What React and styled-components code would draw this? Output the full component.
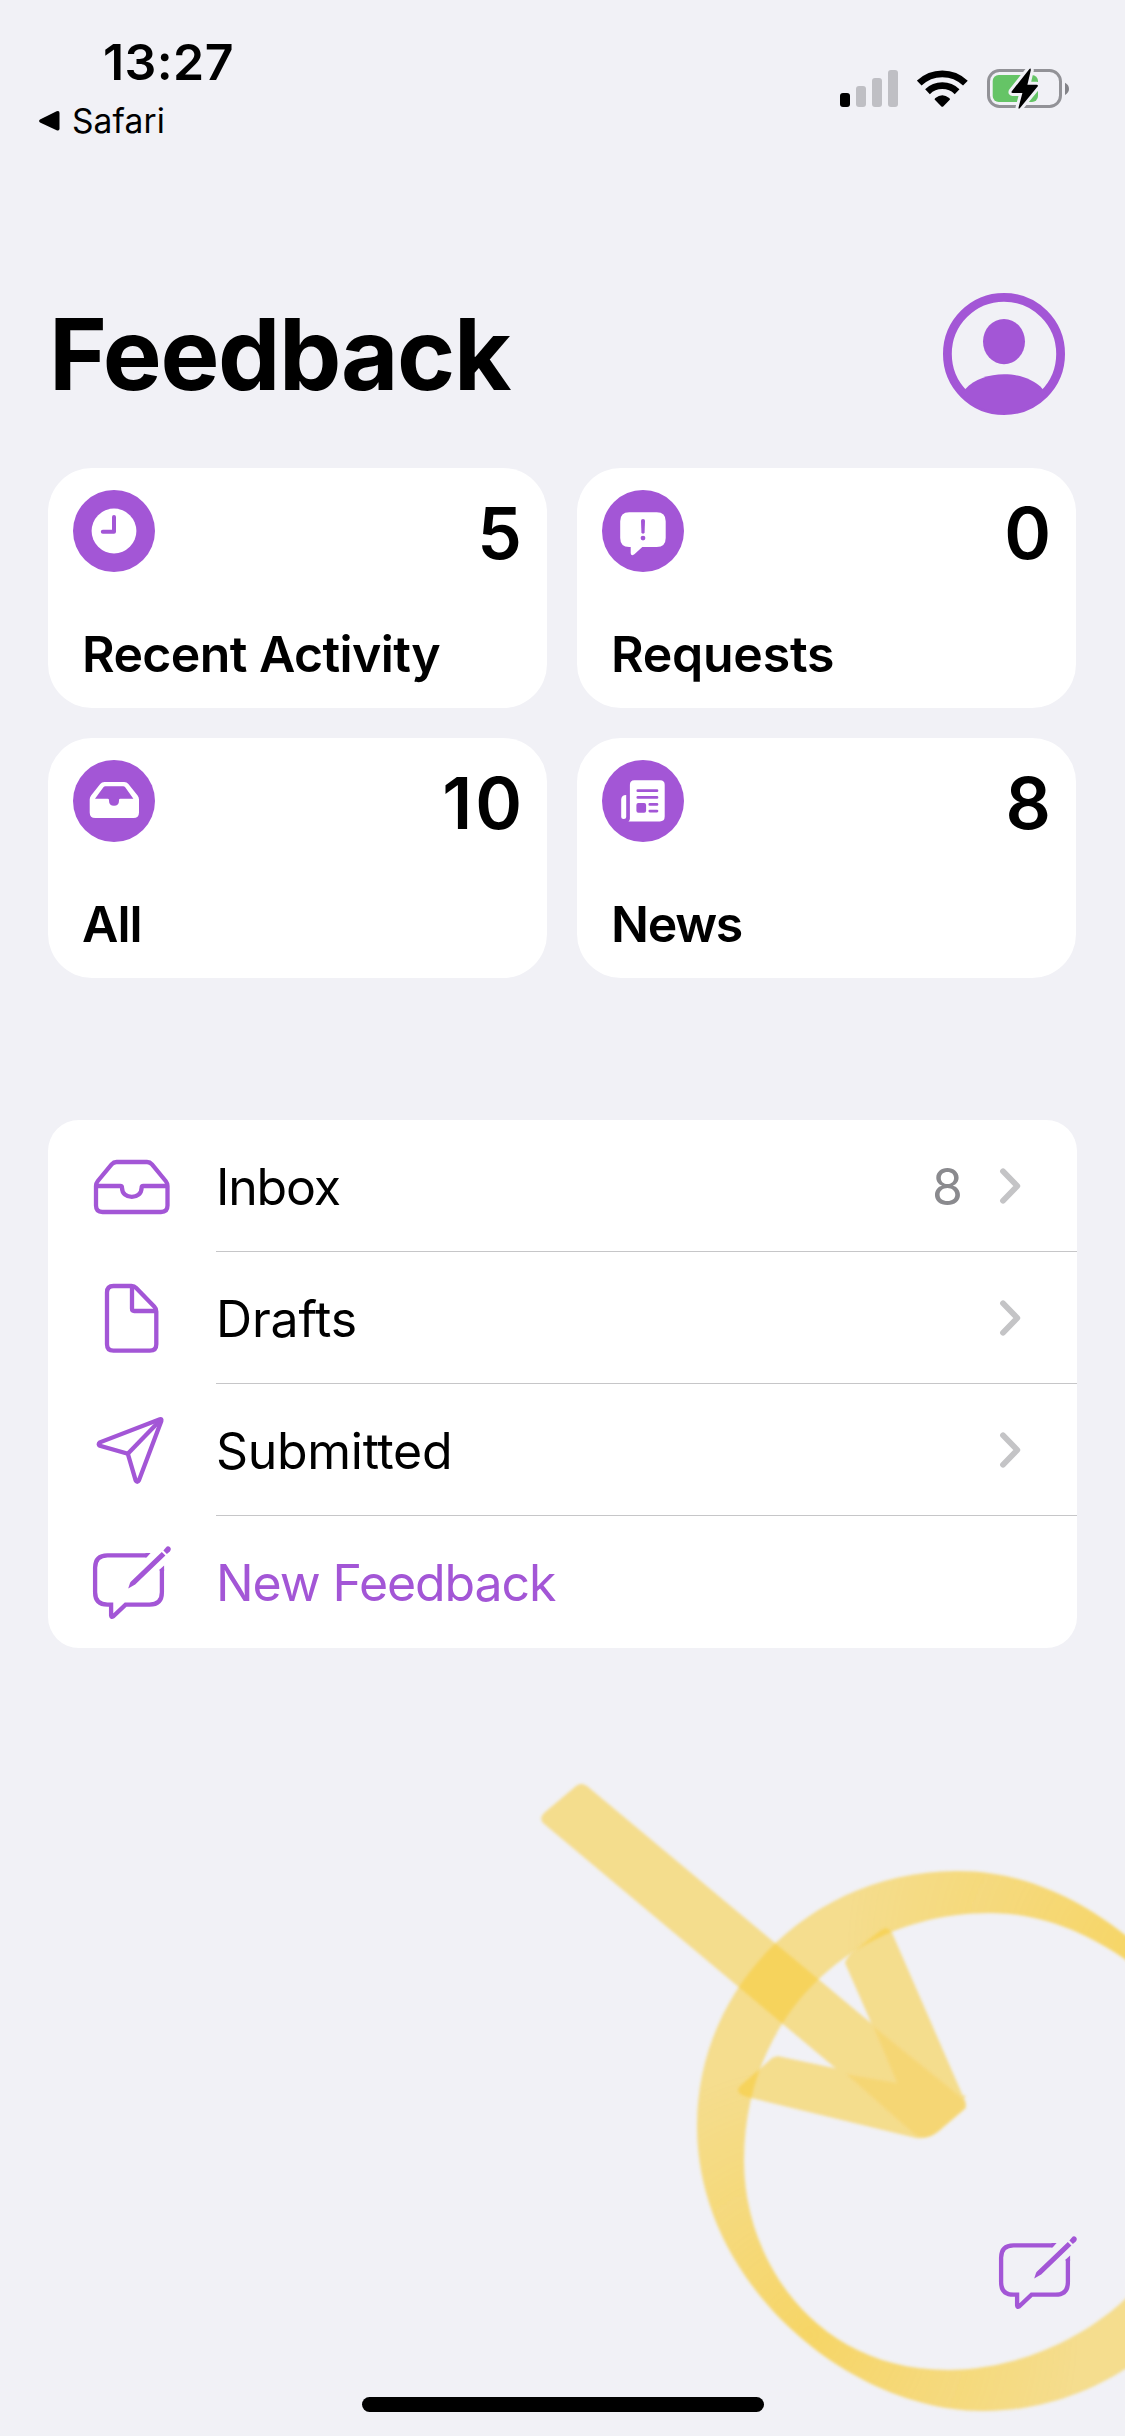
import React from "react";
import styled, { createGlobalStyle } from "styled-components";

const purple = "#a356d6";
const background = "#f1f1f6";
const marker = "#f8cb34";

const summary = [
  { label: "Recent Activity", count: 5, icon: "clock", tracking: -0.6 },
  { label: "Requests", count: 0, icon: "bubble", tracking: -0.25 },
  { label: "All", count: 10, icon: "tray", tracking: -1 },
  { label: "News", count: 8, icon: "news", tracking: -1.3 },
];

const folders = [
  { label: "Inbox", count: 8, icon: "inbox", chevron: true, tracking: -1.2 },
  { label: "Drafts", icon: "draft", chevron: true, tracking: -0.2 },
  { label: "Submitted", icon: "plane", chevron: true, tracking: -0.3 },
  { label: "New Feedback", icon: "compose", accent: true, tracking: -1.1 },
];

const badges = {
  clock: (
    <>
      <circle cx="41" cy="41" r="22.4" fill="#fff" />
      <path
        d="M41 27V41.7H29.8"
        fill="none"
        stroke={purple}
        strokeWidth="4"
        strokeLinecap="round"
        strokeLinejoin="round"
      />
    </>
  ),
  bubble: (
    <>
      <path
        d="M27.2 22.3H54.7Q63.7 22.3 63.7 31.3V48Q63.7 57 54.7 57H40.3L32.4 64.2Q28.7 66.6 28.7 63V57H27.2Q18.2 57 18.2 48V31.3Q18.2 22.3 27.2 22.3Z"
        fill="#fff"
      />
      <path
        d="M39 30.6Q39 29 41 29T43 30.6L42.6 42.3Q42.5 43.7 41 43.7T39.4 42.3Z"
        fill={purple}
      />
      <circle cx="41" cy="48.1" r="2.4" fill={purple} />
    </>
  ),
  tray: (
    <>
      <path
        d="M31.5 22H51.2Q53.8 22 55.4 24.1L64.6 35.6Q66 37.4 66 39.5V52.4Q66 58 60.4 58H22.3Q16.7 58 16.7 52.4V39.5Q16.7 37.4 18.1 35.6L27.2 24.1Q28.8 22 31.5 22Z"
        fill="#fff"
      />
      <path
        d="M32.4 26.3H50.2Q51.4 26.3 52.2 27.3L60.4 38.7H47.4Q46 38.7 46 40.1V40.7Q46 45.7 41 45.7T36 40.7V40.1Q36 38.7 34.6 38.7H22L30.4 27.3Q31.2 26.3 32.4 26.3Z"
        fill={purple}
      />
    </>
  ),
  news: (
    <>
      <path
        d="M32.4 20.2H58.1Q62.7 20.2 62.7 24.8V56.6Q62.7 61.5 57.8 61.5H26.4Q27.9 60.4 27.9 58.4V24.8Q27.9 20.2 32.4 20.2Z"
        fill="#fff"
      />
      <path
        d="M24.2 35V56.5Q24.2 59 21.7 59T19.2 56.5V39.6Q19.2 35.2 24.2 35Z"
        fill="#fff"
      />
      <path
        d="M35.8 30.7H55M35.8 37.4H55M47.8 44.4H55M47.8 51.1H55"
        stroke={purple}
        strokeWidth="2.7"
        strokeLinecap="round"
      />
      <rect x="34.4" y="43" width="9.7" height="9.7" rx="2" fill={purple} />
    </>
  ),
};

const lineIcons = {
  inbox: (
    <>
      <path d="M26.6 18H57Q60 18 62 20.3L75.7 37Q77.5 39.2 77.5 42V61.5Q77.5 68 71 68H12.5Q6 68 6 61.5V42Q6 39.2 7.8 37L21.6 20.3Q23.6 18 26.6 18Z" />
      <path d="M6 42H30.3Q32 42 32 43.7C32 56 51.6 56 51.6 43.7Q51.6 42 53.3 42H77.5" />
    </>
  ),
  draft: (
    <>
      <path d="M23.5 10H41.5Q44.3 10 46.2 12L64.2 30.4Q66.3 32.5 66.3 35.5V68.2Q66.3 74.7 59.8 74.7H23.5Q17 74.7 17 68.2V16.5Q17 10 23.5 10Z" />
      <path d="M42 11V32.8Q42 35 44.2 35H65.5" />
    </>
  ),
  plane: (
    <>
      <path d="M69.9 11.2L10 34.3Q7.4 36.2 10 37.8L37.8 45.7L45.6 72.2Q47.2 75.4 49 72.2L71.3 13Q71.9 10.6 69.9 11.2Z" />
      <path d="M70 12.5L37.8 45.7" />
    </>
  ),
  compose: (
    <>
      <path d="M56 15.3H17.5Q5.1 15.3 5.1 27.7V52.3Q5.1 64.7 17.5 64.7H21.1V75.5Q21.3 77.6 23 76.5L35.6 64.7H59.5Q71.9 64.7 71.9 52.3V29" />
      <g fill={purple} stroke="none">
        <path d="M55.5 13.1H60.6L56.6 17.5H55.5ZM69.7 29.5V31H74.1V25.4Z" />
        <path d="M38.2 48.6L40 43Q40.3 42.2 41 41.5L71.8 12L75.4 15.6L45.2 44.5Q44.4 45.2 43.4 45.6Z" />
        <path d="M73.4 10.6L75.7 7.7Q77.8 5.2 79.8 7.1T79.8 11.6L76.9 14Z" />
      </g>
    </>
  ),
};

const LineIcon = ({ name }) => (
  <LineSvg viewBox="0 0 84 84">{lineIcons[name]}</LineSvg>
);

const StatusIcons = () => (
  <Indicators>
    <svg width="59" height="38" viewBox="0 0 59 38">
      <rect x="0" y="23" width="10" height="14" rx="3" />
      <rect x="16" y="16" width="10" height="21" rx="3" fill="#bfbfc4" />
      <rect x="32" y="8" width="10" height="29" rx="3" fill="#bfbfc4" />
      <rect x="48" y="0" width="10" height="37" rx="3" fill="#bfbfc4" />
    </svg>
    <svg width="51" height="38" viewBox="0 0 51 38">
      <path
        d="M2.2 13.1A33.3 33.3 0 0 1 48.4 13.1M10.5 21.7A21.3 21.3 0 0 1 40.1 21.7"
        fill="none"
        stroke="#000"
        strokeWidth="6.8"
      />
      <path d="M24.4 36.4L17.6 29.4Q17.6 28.6 18.4 28Q25.3 22.6 32.2 28Q33 28.6 33 29.4L26.2 36.4Q25.3 37.2 24.4 36.4Z" />
    </svg>
    <svg width="86" height="46" viewBox="0 0 86 46">
      <rect x="2.5" y="4.5" width="72" height="36" rx="11" fill="none" stroke="#929297" strokeWidth="3" />
      <path d="M79 16.7Q83 18.7 83 22.7T79 28.9Z" fill="#838388" />
      <rect x="6.7" y="9" width="45.3" height="27" rx="6" fill="#65c466" />
      <path
        d="M43.2 3.2Q44.9 1.6 44.8 4.2L41.4 18.8H50.6Q52.6 19 51.6 20.6L34 42Q32.2 43.6 32.6 41.2L36.4 27H26.6Q24.8 26.8 25.8 25.2Z"
        stroke={background}
        strokeWidth="6"
        strokeLinejoin="round"
        paintOrder="stroke"
      />
    </svg>
  </Indicators>
);

// hand-drawn highlighter: a ring running off the right edge and an arrow into it
const Highlight = () => {
  const ring =
    "M1140 1947C1085 1900 1025 1871 957 1871C813 1871 697 1985 697 2126C697 2285 850 2411 983 2411C1035 2411 1090 2395 1140 2359V2284C1095 2335 1020 2370 948 2370C815 2370 744 2260 744 2161C744 2018 850 1913 990 1913C1040 1913 1090 1932 1140 1970Z";
  return (
    <Overlay viewBox="520 1760 605 676">
      <defs>
        <filter id="soft" x="-5%" y="-5%" width="110%" height="110%">
          <feGaussianBlur stdDeviation="1.6" />
        </filter>
        <radialGradient id="thinTop" gradientUnits="userSpaceOnUse" cx="1135" cy="1950" r="290">
          <stop offset="0" stopColor={marker} stopOpacity="0.42" />
          <stop offset="1" stopColor={marker} stopOpacity="0" />
        </radialGradient>
        <radialGradient id="thinBottom" gradientUnits="userSpaceOnUse" cx="810" cy="2335" r="270">
          <stop offset="0" stopColor={marker} stopOpacity="0.42" />
          <stop offset="1" stopColor={marker} stopOpacity="0" />
        </radialGradient>
      </defs>
      <g filter="url(#soft)">
        <path d={ring} fill={marker} opacity="0.54" />
        <path d={ring} fill="url(#thinTop)" />
        <path d={ring} fill="url(#thinBottom)" />
      </g>
      <g filter="url(#soft)">
        <g opacity="0.53" fill={marker}>
          <path d="M576 1786Q581 1782 587 1786L956 2094Q969 2104 965 2109L938 2132Q924 2142 914 2134L543 1823Q539 1818 544 1813Z" />
          <path d="M881 1930Q889 1925 893 1935L966 2103L938 2131L904 2098L845 1963Q846 1959 850 1954Z" />
          <path d="M772 2058Q777 2055 782 2057L966 2096L940 2130Q928 2140 916 2138L751 2098Q733 2094 740 2086Z" />
        </g>
        <path
          d="M873 2026L956 2093Q969 2103 965 2108L938 2131Q926 2142 914 2134L846 2074L897 2083Z"
          fill={marker}
          opacity="0.3"
        />
      </g>
    </Overlay>
  );
};

const App = () => {
  return (
    <Screen>
      <GlobalStyle />
      <StatusBar>
        <div>
          <Time>13:27</Time>
          <BackLink>
            <svg width="21" height="22" viewBox="0 0 21 22">
              <path d="M1 9.5L17.6 1.3Q20.5 0.2 20.5 3V18.6Q20.5 21.4 17.6 20.3L1 12.5Q-0.8 11 1 9.5Z" />
            </svg>
            Safari
          </BackLink>
        </div>
        <StatusIcons />
      </StatusBar>

      <Header>
        <Title>Feedback</Title>
        <svg width="122" height="122" viewBox="0 0 122 122" fill={purple}>
          <circle cx="61" cy="61" r="56.6" fill="none" stroke={purple} strokeWidth="8.8" />
          <ellipse cx="61" cy="48.6" rx="21" ry="22.6" />
          <path d="M22.4 96C40 76.3 82 76.3 99.6 96L104 101A59 59 0 0 1 18 101Z" />
        </svg>
      </Header>

      <Cards>
        {summary.map((item) => (
          <Card key={item.label}>
            <CardTop>
              <svg width="82" height="82" viewBox="0 0 82 82">
                <circle cx="41" cy="41" r="41" fill={purple} />
                {badges[item.icon]}
              </svg>
              <Count>{item.count}</Count>
            </CardTop>
            <CardLabel $tracking={item.tracking}>{item.label}</CardLabel>
          </Card>
        ))}
      </Cards>

      <List>
        {folders.map((item) => (
          <Row key={item.label}>
            <LineIcon name={item.icon} />
            <RowBody>
              <RowLabel $accent={item.accent} $tracking={item.tracking}>
                {item.label}
              </RowLabel>
              {item.count && <RowCount>{item.count}</RowCount>}
              {item.chevron && (
                <svg width="22" height="38" viewBox="0 0 22 38">
                  <path
                    d="M4 4.3L18.3 19L4 33.7"
                    fill="none"
                    stroke="#c4c4c6"
                    strokeWidth="5.8"
                    strokeLinecap="round"
                    strokeLinejoin="round"
                  />
                </svg>
              )}
            </RowBody>
          </Row>
        ))}
      </List>

      <Toolbar>
        <LineIcon name="compose" />
      </Toolbar>
      <HomeIndicator />
      <Highlight />
    </Screen>
  );
};

const GlobalStyle = createGlobalStyle`
  body {
    margin: 0;
    background: ${background};
  }
`;

const Screen = styled.div`
  position: relative;
  display: flex;
  flex-direction: column;
  width: 1125px;
  height: 2436px;
  overflow: hidden;
  box-sizing: border-box;
  background: ${background};
  color: #000;
  font-family: Inter, "Liberation Sans", sans-serif;

  svg {
    display: block;
    flex-shrink: 0;
  }
`;

const StatusBar = styled.div`
  display: flex;
  justify-content: space-between;
  height: 293px;
  padding: 32px 53px 0 39px;
  box-sizing: border-box;
`;

const Time = styled.div`
  padding-left: 64px;
  font-size: 50px;
  font-weight: 600;
  line-height: 60px;
  letter-spacing: 0.4px;
`;

const BackLink = styled.div`
  display: flex;
  align-items: center;
  gap: 12px;
  margin-top: 7px;
  font-size: 33.5px;
  line-height: 44px;
  letter-spacing: 0.1px;
`;

const Indicators = styled.div`
  display: flex;
  align-items: center;
  gap: 18px;
  height: 46px;
  margin-top: 34px;
`;

const Header = styled.div`
  display: flex;
  align-items: center;
  justify-content: space-between;
  height: 122px;
  padding: 0 60px 0 49px;
`;

const Title = styled.h1`
  margin: 0;
  font-size: 99px;
  font-weight: 700;
  line-height: 122px;
  letter-spacing: -1.4px;
`;

const Cards = styled.div`
  display: grid;
  grid-template-columns: 1fr 1fr;
  gap: 30px;
  margin: 53px 49px 0 48px;
`;

const Card = styled.div`
  height: 240px;
  padding: 22px 25px 0;
  box-sizing: border-box;
  background: #fff;
  border-radius: 44px;
`;

const CardTop = styled.div`
  display: flex;
  justify-content: space-between;
`;

const Count = styled.div`
  margin-right: -3px;
  font-size: 71px;
  font-weight: 600;
  line-height: 86px;
  letter-spacing: 3px;
`;

const CardLabel = styled.div`
  margin: 48px 0 0 9px;
  font-size: 50px;
  font-weight: 600;
  line-height: 60px;
  letter-spacing: ${(props) => props.$tracking}px;
`;

const List = styled.div`
  margin: 142px 48px 0;
  background: #fff;
  border-radius: 31px;
`;

const RowBody = styled.div`
  display: flex;
  flex: 1;
  align-items: center;
  height: 132px;
  margin-left: 42px;
  padding-right: 56px;
`;

const Row = styled.div`
  display: flex;
  align-items: center;
  padding-left: 42px;

  &:not(:last-child) ${RowBody} {
    box-shadow: inset 0 -1px #c6c6c8;
  }
`;

const RowLabel = styled.div`
  flex: 1;
  padding-top: 2px;
  color: ${(props) => (props.$accent ? purple : "#000")};
  font-size: 50px;
  line-height: 60px;
  letter-spacing: ${(props) => props.$tracking}px;
`;

const RowCount = styled.div`
  margin-right: 36px;
  padding-top: 2px;
  color: #8a8a8e;
  font-size: 50px;
  line-height: 60px;
`;

const LineSvg = styled.svg`
  width: 84px;
  height: 84px;
  fill: none;
  stroke: ${purple};
  stroke-width: 4.3px;
`;

const Toolbar = styled.div`
  display: flex;
  justify-content: flex-end;
  margin-top: auto;
  padding: 0 45px 83px 0;
`;

const HomeIndicator = styled.div`
  width: 402px;
  height: 15px;
  margin: 0 auto 24px;
  background: #000;
  border-radius: 8px;
`;

const Overlay = styled.svg`
  position: absolute;
  right: 0;
  bottom: 0;
  width: 605px;
  height: 676px;
  pointer-events: none;
`;

export default App;
